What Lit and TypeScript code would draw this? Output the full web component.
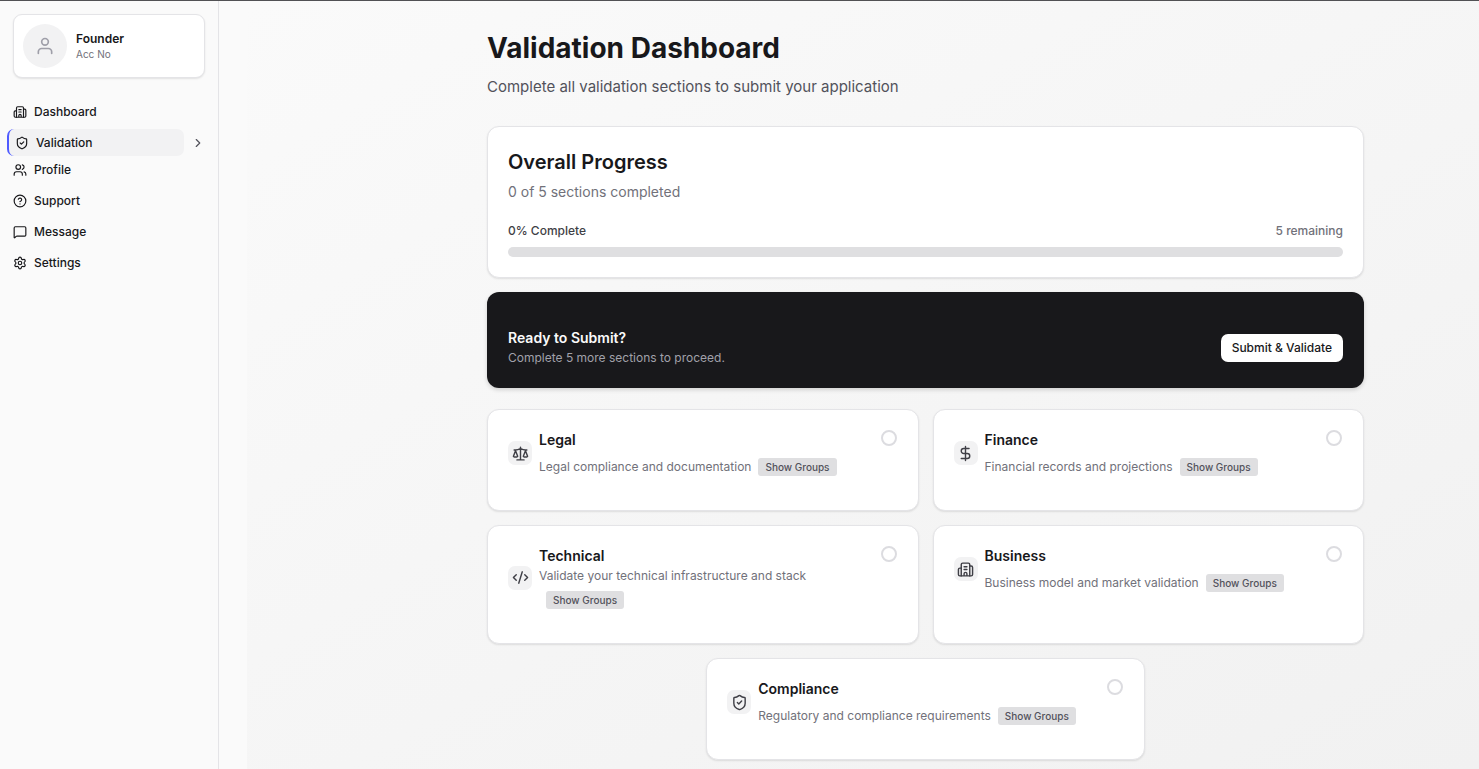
import { LitElement, html, css, svg } from "lit";
import { customElement, property } from "lit/decorators.js";

const shapes: Record<string, unknown> = {
  building: svg`<path d="M10 12h4M10 8h4M14 21v-3a2 2 0 0 0-4 0v3M6 10H4a2 2 0 0 0-2 2v7a2 2 0 0 0 2 2h16a2 2 0 0 0 2-2V9a2 2 0 0 0-2-2h-2"/><path d="M6 21V5a2 2 0 0 1 2-2h8a2 2 0 0 1 2 2v16"/>`,
  shield: svg`<path d="M20 13c0 5-3.500 7.500-7.660 8.950a1 1 0 0 1-.67-.01C7.500 20.500 4 18 4 13V6a1 1 0 0 1 1-1c2 0 4.500-1.200 6.240-2.720a1.170 1.170 0 0 1 1.520 0C14.510 3.810 17 5 19 5a1 1 0 0 1 1 1z"/><path d="m9 12 2 2 4-4"/>`,
  users: svg`<path d="M16 21v-2a4 4 0 0 0-4-4H6a4 4 0 0 0-4 4v2"/><circle cx="9" cy="7" r="4"/><path d="M22 21v-2a4 4 0 0 0-3-3.870M16 3.130a4 4 0 0 1 0 7.750"/>`,
  help: svg`<circle cx="12" cy="12" r="10"/><path d="M9.090 9a3 3 0 0 1 5.830 1c0 2-3 3-3 3M12 17h.01"/>`,
  message: svg`<path d="M22 17a2 2 0 0 1-2 2H6.828a2 2 0 0 0-1.414.586l-2.202 2.202A.71.71 0 0 1 2 21.286V5a2 2 0 0 1 2-2h16a2 2 0 0 1 2 2z"/>`,
  settings: svg`<path d="M9.671 4.136a2.340 2.340 0 0 1 4.659 0 2.340 2.340 0 0 0 3.319 1.915 2.340 2.340 0 0 1 2.330 4.033 2.340 2.340 0 0 0 0 3.831 2.340 2.340 0 0 1-2.330 4.033 2.340 2.340 0 0 0-3.319 1.915 2.340 2.340 0 0 1-4.659 0 2.340 2.340 0 0 0-3.320-1.915 2.340 2.340 0 0 1-2.330-4.033 2.340 2.340 0 0 0 0-3.831A2.340 2.340 0 0 1 6.350 6.051a2.340 2.340 0 0 0 3.319-1.915"/><circle cx="12" cy="12" r="3"/>`,
  user: svg`<circle cx="12" cy="7" r="4"/><path d="M20 21v-2a4 4 0 0 0-4-4H8a4 4 0 0 0-4 4v2"/>`,
  chevron: svg`<path d="m9 18 6-6-6-6"/>`,
  scale: svg`<path d="m16 16 3-8 3 8c-.87.65-1.920 1-3 1s-2.130-.35-3-1ZM2 16l3-8 3 8c-.87.65-1.920 1-3 1s-2.130-.35-3-1ZM7 21h10M12 3v18M3 7h2c2 0 5-1 7-2 2 1 5 2 7 2h2"/>`,
  dollar: svg`<path d="M12 2v20M17 5H9.500a3.500 3.500 0 0 0 0 7h5a3.500 3.500 0 0 1 0 7H6"/>`,
  code: svg`<path d="m18 16 4-4-4-4M6 8l-4 4 4 4M14.500 4l-5 16"/>`,
};

@customElement("line-icon")
export class LineIcon extends LitElement {
  @property() name = "user";
  static styles = css`
    :host { display: block; width: 14px; height: 14px; flex: none; }
    .glyph { display: block; width: 100%; height: 100%; fill: none; stroke: currentColor; stroke-width: 2; stroke-linecap: round; stroke-linejoin: round; }
  `;
  render() {
    return html`<svg class="glyph" viewBox="0 0 24 24" aria-hidden="true">${shapes[this.name]}</svg>`;
  }
}

@customElement("section-card")
export class SectionCard extends LitElement {
  @property() icon = "";
  @property() heading = "";
  @property() description = "";
  static styles = css`
    :host { display: block; box-sizing: border-box; background: #fff; border: 1px solid #e4e4e7; border-radius: 12px; box-shadow: 0 1px 2px #0000001a; padding: 20px 20px 34px; }
    .row { display: flex; align-items: flex-start; justify-content: space-between; }
    .lead { display: flex; align-items: center; gap: 7px; }
    .tile { display: grid; place-items: center; flex: none; width: 24px; height: 24px; border-radius: 7px; background: #f2f2f3; color: #3f3f46; }
    .tile line-icon { width: 17px; height: 17px; }
    .title { margin: 0; font-size: 14px; line-height: 20px; font-weight: 600; color: #18181b; }
    .text { margin: 1px 0 0; max-width: 330px; font-size: 12px; line-height: 17px; color: #71717a; }
    .groups { margin: 7px 0 0 7px; padding: 0 7px; border: 0; border-radius: 3px; background: #dfdfe1; color: #52525b; font: 500 10px/18px Inter, sans-serif; }
    .state { appearance: none; box-sizing: border-box; flex: none; width: 16px; height: 16px; margin: 0 1px; border: 2px solid #dcdce0; border-radius: 50%; }
  `;
  render() {
    return html`
      <div class="row">
        <div class="lead">
          <span class="tile"><line-icon name=${this.icon}></line-icon></span>
          <div>
            <h3 class="title">${this.heading}</h3>
            <p class="text">${this.description}<button class="groups" type="button">Show Groups</button></p>
          </div>
        </div>
        <input class="state" type="radio" aria-label="${this.heading} completed" />
      </div>`;
  }
}

@customElement("app-root")
export class AppRoot extends LitElement {
  static styles = css`
    :host { display: block; font-family: Inter, sans-serif; color: #18181b; }
    .page { box-sizing: border-box; display: grid; grid-template-columns: 219px 1fr; min-height: 100vh; border-top: 1px solid #515154; background: #fafafa; }
    .side { box-sizing: border-box; border-right: 1px solid #e4e4e7; padding: 13px 13px 0; }
    .account { display: flex; align-items: center; gap: 9px; padding: 9px; border: 1px solid #e4e4e7; border-radius: 9px; background: #fff; box-shadow: 0 1px 2px #0000001a; }
    .avatar { display: grid; place-items: center; width: 44px; height: 44px; border-radius: 50%; background: #f2f2f3; color: #9f9fa9; }
    .avatar line-icon { width: 20px; height: 20px; }
    .name { margin: 0; font-size: 12px; line-height: 16px; font-weight: 600; }
    .number { margin: 0; font-size: 10px; line-height: 14px; color: #71717a; }
    .menu { list-style: none; margin: 20px 0 0; padding: 0; display: grid; gap: 4px; }
    .item { display: flex; align-items: center; justify-content: space-between; }
    .link { display: flex; align-items: center; gap: 7px; height: 27px; font-size: 12px; font-weight: 500; color: #18181b; text-decoration: none; }
    .current { margin: 0 -6px -4px -6px; }
    .current .link { flex: 1; padding-left: 6px; border-left: 2px solid #4f5bff; border-radius: 7px; background: #f2f2f3; }
    .more { display: grid; place-items: center; width: 27px; height: 27px; padding: 0; border: 0; background: none; color: #52525b; }
    .main { background: linear-gradient(150deg, #fafafa, #f1f1f1); margin-left: 28px; padding: 29px 0 7px 125px; }
    .content { max-width: 877px; margin: 0 auto; }
    .heading { margin: 0; font-size: 28px; line-height: 36px; font-weight: 700; }
    .intro { margin: 9px 0 27px; font-size: 15px; line-height: 24px; color: #52525b; }
    .progress { border: 1px solid #e4e4e7; border-radius: 12px; padding: 20px; background: #fff; box-shadow: 0 1px 2px #0000001a; }
    .subhead { margin: 0; font-size: 20px; line-height: 30px; font-weight: 600; }
    .count { margin: 5px 0 20px; font-size: 14px; line-height: 20px; color: #71717a; }
    .labels { display: flex; justify-content: space-between; font-size: 12px; line-height: 18px; font-weight: 500; color: #3f3f46; }
    .remaining { color: #71717a; }
    .bar { display: block; appearance: none; width: 100%; height: 10px; margin-top: 7px; border: 0; border-radius: 5px; overflow: hidden; background: #dfdfe1; }
    .bar::-webkit-progress-bar { background: #dfdfe1; }
    .bar::-webkit-progress-value { background: #18181b; }
    .ready { display: flex; align-items: center; justify-content: space-between; margin: 14px 0 21px; padding: 35px 21px 20px; border-radius: 12px; background: #18181b; box-shadow: 0 2px 4px #00000026; }
    .ready-title { margin: 0; font-size: 14px; line-height: 21px; font-weight: 600; color: #fafafa; }
    .ready-text { margin: 0; font-size: 12px; line-height: 20px; color: #a1a1aa; }
    .submit { height: 28px; padding: 0 11px; border: 0; border-radius: 7px; background: #fff; color: #18181b; font: 500 12px/16px Inter, sans-serif; }
    .cards { display: grid; grid-template-columns: 1fr 1fr; gap: 14px; }
    .wide { grid-column: 1 / -1; justify-self: center; width: 50%; }
  `;

  private items = [
    ["Dashboard", "building"], ["Validation", "shield"], ["Profile", "users"],
    ["Support", "help"], ["Message", "message"], ["Settings", "settings"],
  ];
  private sections = [
    ["Legal", "scale", "Legal compliance and documentation"],
    ["Finance", "dollar", "Financial records and projections"],
    ["Technical", "code", "Validate your technical infrastructure and stack"],
    ["Business", "building", "Business model and market validation"],
    ["Compliance", "shield", "Regulatory and compliance requirements"],
  ];

  render() {
    return html`
      <div class="page">
        <aside class="side">
          <div class="account">
            <span class="avatar"><line-icon name="user"></line-icon></span>
            <div><p class="name">Founder</p><p class="number">Acc No</p></div>
          </div>
          <nav>
            <ul class="menu">
              ${this.items.map(([label, icon]) => html`
                <li class="item ${label === "Validation" ? "current" : ""}">
                  <a class="link" href="#"><line-icon name=${icon}></line-icon>${label}</a>
                  ${label === "Validation" ? html`<button class="more" type="button" aria-label="Expand validation"><line-icon name="chevron"></line-icon></button>` : ""}
                </li>`)}
            </ul>
          </nav>
        </aside>
        <main class="main">
          <div class="content">
            <h1 class="heading">Validation Dashboard</h1>
            <p class="intro">Complete all validation sections to submit your application</p>
            <section class="progress">
              <h2 class="subhead">Overall Progress</h2>
              <p class="count">0 of 5 sections completed</p>
              <div class="labels"><label for="overall">0% Complete</label><span class="remaining">5 remaining</span></div>
              <progress class="bar" id="overall" max="100" value="0"></progress>
            </section>
            <section class="ready">
              <div><h2 class="ready-title">Ready to Submit?</h2><p class="ready-text">Complete 5 more sections to proceed.</p></div>
              <button class="submit" type="button">Submit &amp; Validate</button>
            </section>
            <div class="cards">
              ${this.sections.map(([heading, icon, text], i) => html`
                <section-card class=${i === 4 ? "wide" : ""} heading=${heading} icon=${icon} description=${text}></section-card>`)}
            </div>
          </div>
        </main>
      </div>`;
  }
}
